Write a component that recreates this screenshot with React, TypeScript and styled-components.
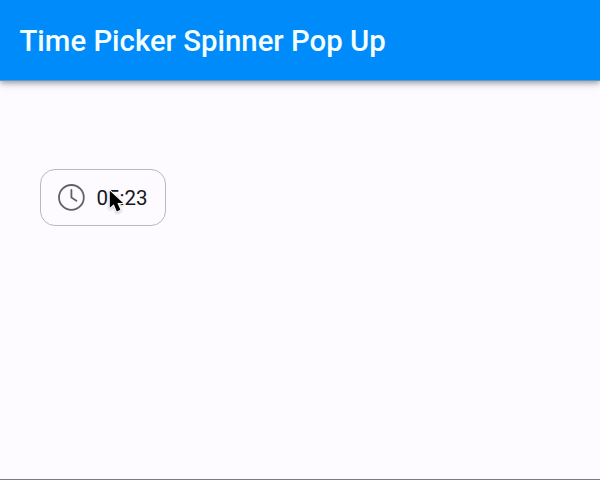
import React from "react";
import styled, { createGlobalStyle } from "styled-components";

const GlobalStyle = createGlobalStyle`
  body {
    margin: 0;
    background: #fdfbff;
    font-family: Roboto, "Liberation Sans", sans-serif;
  }
`;

const Screen = styled.div`
  box-sizing: border-box;
  height: 480px;
  overflow: hidden;
  display: flex;
  flex-direction: column;
  background: #fdfbff;
  border-bottom: 1px solid #7d7b7e;
`;

const AppBar = styled.header`
  box-sizing: border-box;
  flex: none;
  height: 81px;
  padding: 0 19.5px;
  display: flex;
  align-items: center;
  background: #008bfb;
  border-bottom: 1px solid #5799cd;
  box-shadow: 0 2px 5px rgba(0, 0, 0, 0.28), 0 3px 9px rgba(0, 0, 0, 0.14);
`;

const Title = styled.h1`
  margin: 0;
  padding-top: 2px;
  font-size: 29.33px;
  line-height: 36px;
  font-weight: 500;
  color: #f4feff;
  white-space: nowrap;
`;

const Content = styled.main`
  flex: 1;
  padding: 88px 40px;
`;

const TimeField = styled.button`
  position: relative;
  box-sizing: border-box;
  width: 126px;
  height: 57px;
  padding: 0 0 0 17px;
  display: flex;
  align-items: center;
  gap: 10.5px;
  border: 1px solid #bab8bc;
  border-radius: 15px;
  background: transparent;
  color: #17161a;
  font: 400 20.5px/28px Roboto, "Liberation Sans", sans-serif;
`;

const ClockIcon = styled.svg`
  flex: none;
  width: 28px;
  height: 28px;
  fill: none;
  stroke: #626165;
  stroke-width: 1.8;
  stroke-linecap: round;
  stroke-linejoin: round;
`;

const Time = styled.span`
  padding-top: 1px;
`;

const Pointer = styled.svg`
  position: absolute;
  left: 66px;
  top: 18px;
  width: 20px;
  height: 28px;
  overflow: visible;
  filter: drop-shadow(0 1px 1px rgba(0, 0, 0, 0.25));
`;

export default function App() {
  return (
    <>
      <GlobalStyle />
      <Screen>
        <AppBar>
          <Title>Time Picker Spinner Pop Up</Title>
        </AppBar>
        <Content>
          <TimeField type="button">
            <ClockIcon viewBox="0 0 28 28">
              <circle cx="13.4" cy="13.4" r="12.4" />
              <path d="M13.4 5.9v7.7l5 3.1" />
            </ClockIcon>
            <Time>05:23</Time>
            <Pointer viewBox="0 0 20 28">
              <path
                d="M2.8 2.8V19.8l4-3.6 3 7.2 3.6-1.6-3-6.8h5.7z"
                fill="#000"
                stroke="#fff"
                strokeWidth="2.2"
                strokeLinejoin="round"
                paintOrder="stroke"
              />
            </Pointer>
          </TimeField>
        </Content>
      </Screen>
    </>
  );
}
